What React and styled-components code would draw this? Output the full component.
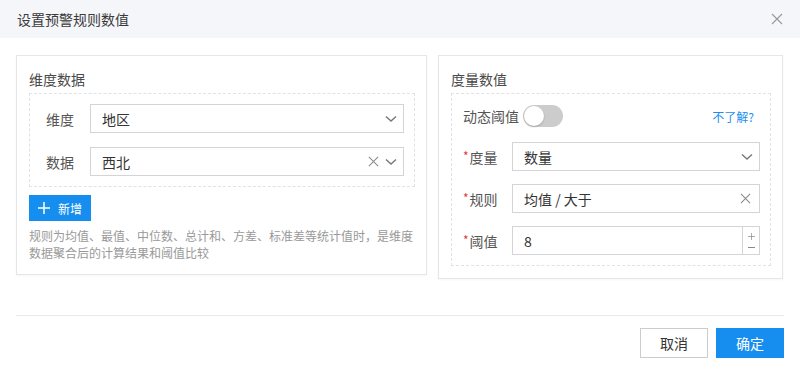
import React from 'react';
import styled, { createGlobalStyle } from 'styled-components';

const GlobalStyle = createGlobalStyle`
  html, body {
    margin: 0;
    padding: 0;
    background: #fff;
  }
  body {
    font-family: "Noto Sans CJK SC", "Noto Sans", sans-serif;
    color: #333;
  }
`;

const Dialog = styled.div`
  width: 800px;
  height: 370px;
  background: #fff;
  display: flex;
  flex-direction: column;
`;

const Header = styled.div`
  height: 38px;
  flex: none;
  background: #f5f6fa;
  padding: 0 16px 0 17px;
  display: flex;
  align-items: center;
  justify-content: space-between;
`;

const Title = styled.span`
  font-size: 14px;
  color: #3a3a3a;
`;

const CloseBtn = styled.span`
  width: 12px;
  height: 12px;
  display: flex;
  margin-right: 1px;
`;

const Body = styled.div`
  height: 277px;
  flex: none;
  box-sizing: border-box;
  padding: 17px 16px 0;
  display: flex;
  align-items: flex-start;
  gap: 11px;
`;

const Card = styled.div`
  width: ${p => p.$width}px;
  box-sizing: border-box;
  border: 1px solid #e6e6e6;
  box-shadow: 0 1px 2px rgba(0, 0, 0, 0.04);
  padding: 13px 11px ${p => p.$bottom}px 12px;
`;

const CardTitle = styled.div`
  font-size: 14px;
  line-height: 20px;
  color: #4a4a4a;
  margin-bottom: 4px;
`;

const DashBox = styled.div`
  border: 1px dashed #e2e2e2;
  padding: ${p => p.$top}px 10px 10px 0;
  display: flex;
  flex-direction: column;
  gap: ${p => p.$gap}px;
`;

const Row = styled.div`
  display: flex;
  align-items: center;
  margin-top: ${p => p.$offset || 0}px;
`;

const Label = styled.span`
  width: ${p => (p.$auto ? 'auto' : '60px')};
  flex: none;
  box-sizing: border-box;
  padding-left: ${p => p.$pad}px;
  padding-right: ${p => (p.$auto ? 4 : 0)}px;
  font-size: 14px;
  color: #555;
`;

const Star = styled.span`
  color: #e4393c;
  font-size: 12px;
  margin-right: 1px;
  vertical-align: 2px;
`;

const Field = styled.div`
  flex: 1;
  height: 29px;
  box-sizing: border-box;
  border: 1px solid #d4d4d4;
  display: flex;
  align-items: center;
  padding-left: 11px;
  font-size: 14px;
  color: #333;
`;

const FieldText = styled.span`
  flex: 1;
`;

const Icons = styled.span`
  display: flex;
  align-items: center;
  gap: 6px;
  padding-right: ${p => p.$right || 6}px;
`;

const Stepper = styled.div`
  width: 16px;
  align-self: stretch;
  border-left: 1px solid #d4d4d4;
  display: flex;
  flex-direction: column;
  align-items: center;
  justify-content: center;
  gap: 7px;
`;

const AddButton = styled.button`
  margin-top: 8px;
  height: 26px;
  padding: 0 9px;
  border: none;
  background: #168ef0;
  color: #fff;
  font-family: inherit;
  font-size: 12px;
  display: flex;
  align-items: center;
  gap: 8px;
  cursor: pointer;
`;

const Hint = styled.p`
  margin: 6px 0 0;
  font-size: 12px;
  line-height: 17px;
  color: #999;
`;

const Toggle = styled.span`
  width: 40px;
  height: 22px;
  border-radius: 11px;
  background: #cccccc;
  position: relative;
  flex: none;

  &::after {
    content: '';
    position: absolute;
    left: 1px;
    top: 1px;
    width: 20px;
    height: 20px;
    border-radius: 50%;
    background: #fff;
    box-shadow: 0 1px 2px rgba(0, 0, 0, 0.2);
  }
`;

const Help = styled.a`
  margin-left: auto;
  margin-right: 6px;
  font-size: 12px;
  color: #1a8ef0;
  text-decoration: none;
`;

const Footer = styled.div`
  margin: 0 16px;
  border-top: 1px solid #e8e8ef;
  padding-top: 12px;
  display: flex;
  justify-content: flex-end;
  gap: 8px;
`;

const FooterButton = styled.button`
  width: 68px;
  height: 30px;
  font-family: inherit;
  font-size: 14px;
  border: 1px solid ${p => (p.$primary ? '#168ef0' : '#cccccc')};
  background: ${p => (p.$primary ? '#168ef0' : '#fff')};
  color: ${p => (p.$primary ? '#fff' : '#333')};
  cursor: pointer;
`;

const Chevron = () => (
  <svg width="12" height="8" viewBox="0 0 12 8">
    <path d="M1 1.5 L6 6 L11 1.5" fill="none" stroke="#777" strokeWidth="1.4" />
  </svg>
);

const Cross = ({ size = 11, color = '#888' }) => (
  <svg width={size} height={size} viewBox="0 0 12 12">
    <path d="M1 1 L11 11 M11 1 L1 11" fill="none" stroke={color} strokeWidth="1.1" />
  </svg>
);

const Plus = ({ size = 12, color = '#fff', width = 1.5 }) => (
  <svg width={size} height={size} viewBox="0 0 12 12">
    <path d="M6 0 V12 M0 6 H12" stroke={color} strokeWidth={width} />
  </svg>
);

const Minus = () => (
  <svg width="7" height="1" viewBox="0 0 7 1">
    <path d="M0 0.5 H7" stroke="#888" strokeWidth="1" />
  </svg>
);

export default function App() {
  return (
    <>
      <GlobalStyle />
      <Dialog>
        <Header>
          <Title>设置预警规则数值</Title>
          <CloseBtn>
            <Cross size={12} color="#999" />
          </CloseBtn>
        </Header>
        <Body>
          <Card $width={411} $bottom={13}>
            <CardTitle>维度数据</CardTitle>
            <DashBox $top={10} $gap={14}>
              <Row>
                <Label $pad={16}>维度</Label>
                <Field>
                  <FieldText>地区</FieldText>
                  <Icons><Chevron /></Icons>
                </Field>
              </Row>
              <Row>
                <Label $pad={16}>数据</Label>
                <Field>
                  <FieldText>西北</FieldText>
                  <Icons><Cross size={11} /><Chevron /></Icons>
                </Field>
              </Row>
            </DashBox>
            <AddButton><Plus />新增</AddButton>
            <Hint>
              规则为均值、最值、中位数、总计和、方差、标准差等统计值时，是维度数据聚合后的计算结果和阈值比较
            </Hint>
          </Card>
          <Card $width={345} $bottom={12}>
            <CardTitle>度量数值</CardTitle>
            <DashBox $top={11} $gap={13}>
              <Row>
                <Label $auto $pad={11}>动态阈值</Label>
                <Toggle />
                <Help>不了解?</Help>
              </Row>
              <Row $offset={2}>
                <Label $pad={11}><Star>*</Star>度量</Label>
                <Field>
                  <FieldText>数量</FieldText>
                  <Icons><Chevron /></Icons>
                </Field>
              </Row>
              <Row>
                <Label $pad={11}><Star>*</Star>规则</Label>
                <Field>
                  <FieldText>均值 / 大于</FieldText>
                  <Icons $right={8}><Cross size={11} /></Icons>
                </Field>
              </Row>
              <Row>
                <Label $pad={11}><Star>*</Star>阈值</Label>
                <Field>
                  <FieldText>8</FieldText>
                  <Stepper>
                    <Plus size={7} color="#888" width={1.2} />
                    <Minus />
                  </Stepper>
                </Field>
              </Row>
            </DashBox>
          </Card>
        </Body>
        <Footer>
          <FooterButton>取消</FooterButton>
          <FooterButton $primary>确定</FooterButton>
        </Footer>
      </Dialog>
    </>
  );
}
